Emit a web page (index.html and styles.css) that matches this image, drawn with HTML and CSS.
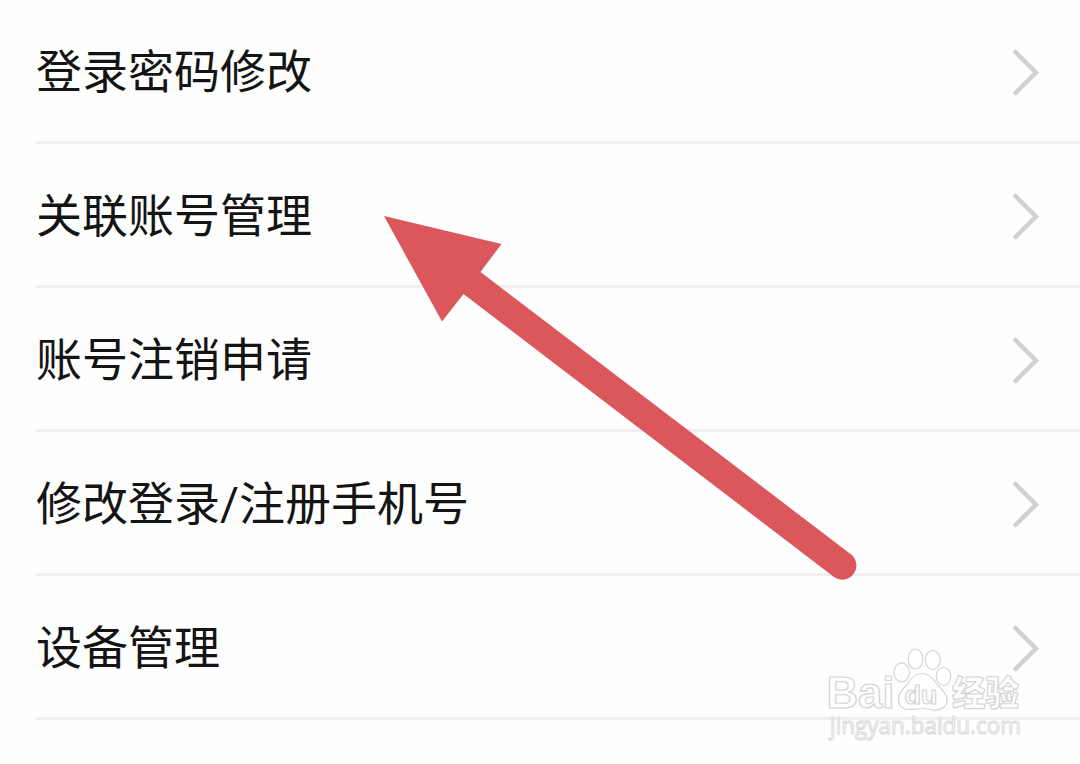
FILE: index.html
```html
<!DOCTYPE html>
<html lang="zh-CN">
<head>
  <meta charset="UTF-8">
  <title>账号管理</title>
  <link rel="stylesheet" href="styles.css">
</head>
<body>

  <div class="list">
    <a class="item">
      <span class="label">登录密码修改</span>
      <svg class="chevron" viewBox="0 0 30 50"><path d="M5.5 5 L26 25.5 L5.5 46"/></svg>
    </a>
    <a class="item">
      <span class="label">关联账号管理</span>
      <svg class="chevron" viewBox="0 0 30 50"><path d="M5.5 5 L26 25.5 L5.5 46"/></svg>
    </a>
    <a class="item">
      <span class="label">账号注销申请</span>
      <svg class="chevron" viewBox="0 0 30 50"><path d="M5.5 5 L26 25.5 L5.5 46"/></svg>
    </a>
    <a class="item">
      <span class="label">修改登录/注册手机号</span>
      <svg class="chevron" viewBox="0 0 30 50"><path d="M5.5 5 L26 25.5 L5.5 46"/></svg>
    </a>
    <a class="item">
      <span class="label">设备管理</span>
      <svg class="chevron" viewBox="0 0 30 50"><path d="M5.5 5 L26 25.5 L5.5 46"/></svg>
    </a>
  </div>

  <!-- Arrow pointing at the second item -->
  <svg class="arrow" viewBox="0 0 1080 764">
    <path d="M384 216 L501.500 244 L480.500 272 L850.500 554 A14 14 0 0 1 834 577 L463.500 294 L442 321.500 Z"/>
  </svg>

  <!-- Watermark -->
  <svg class="watermark" viewBox="820 640 220 110">
    <text class="mark latin" x="826.500" y="708" textLength="68" lengthAdjust="spacingAndGlyphs">Bai</text>
    <ellipse class="mark" cx="901.700" cy="672.300" rx="7.700" ry="9.500"/>
    <ellipse class="mark" cx="915.500" cy="659" rx="7.300" ry="10"/>
    <ellipse class="mark" cx="932.700" cy="660" rx="7.500" ry="9.500"/>
    <ellipse class="mark" cx="943.500" cy="676.500" rx="7.300" ry="9"/>
    <path class="mark" d="M922 673.500 C928 673.500 933 678 936 683 C940 689 947 692 947 700 C947 707 941 710.500 934 710 C929 709.500 926 708.500 922 708.500 C917 708.500 914 709.500 909 709.500 C902 709.500 898 705 898.500 698 C899 691 905 688 909 682 C912 677 916 673.500 922 673.500 Z"/>
    <text class="mark du" x="904.500" y="703.500" textLength="33" lengthAdjust="spacingAndGlyphs">du</text>
    <text class="mark cjk" x="952" y="706" textLength="67" lengthAdjust="spacingAndGlyphs">经验</text>
    <text class="mark url" x="830" y="734" textLength="191" lengthAdjust="spacingAndGlyphs">jingyan.baidu.com</text>
  </svg>

</body>
</html>
```
FILE: styles.css
```css
body {
  margin: 0;
  height: 764px;
  position: relative;
  overflow: hidden;
  background-color: #fefefe;
  font-family: Roboto, "Noto Sans CJK SC", sans-serif;
  color: #141414;
}

.list {
  padding-left: 36px;
}

.item {
  display: flex;
  justify-content: space-between;
  align-items: center;
  box-sizing: border-box;
  height: 144px;
  padding: 3px 40px 0 0;
  border-bottom: 3px solid #efefef;
}

.label {
  font-size: 46px;
  line-height: 60px;
}

.chevron {
  width: 30px;
  height: 50px;
  fill: none;
  stroke: #cfcfcf;
  stroke-width: 4.5;
  stroke-linecap: round;
}

.arrow {
  position: absolute;
  top: 0;
  left: 0;
  width: 1080px;
  height: 764px;
  fill: #dc575c;
}

.watermark {
  position: absolute;
  top: 640px;
  left: 820px;
  width: 220px;
  height: 110px;
}

.mark {
  fill: rgba(255, 255, 255, 0.6);
  stroke: #d4d4d4;
  stroke-width: 1.2;
  stroke-linejoin: round;
}

.latin {
  font: bold 44px "Liberation Sans", sans-serif;
}

.du {
  font: bold 26px "Liberation Sans", sans-serif;
}

.cjk {
  font: 900 35px "Noto Sans CJK SC", sans-serif;
}

.url {
  font: 24px "Open Sans", sans-serif;
  stroke: #dcdcdc;
}
```
